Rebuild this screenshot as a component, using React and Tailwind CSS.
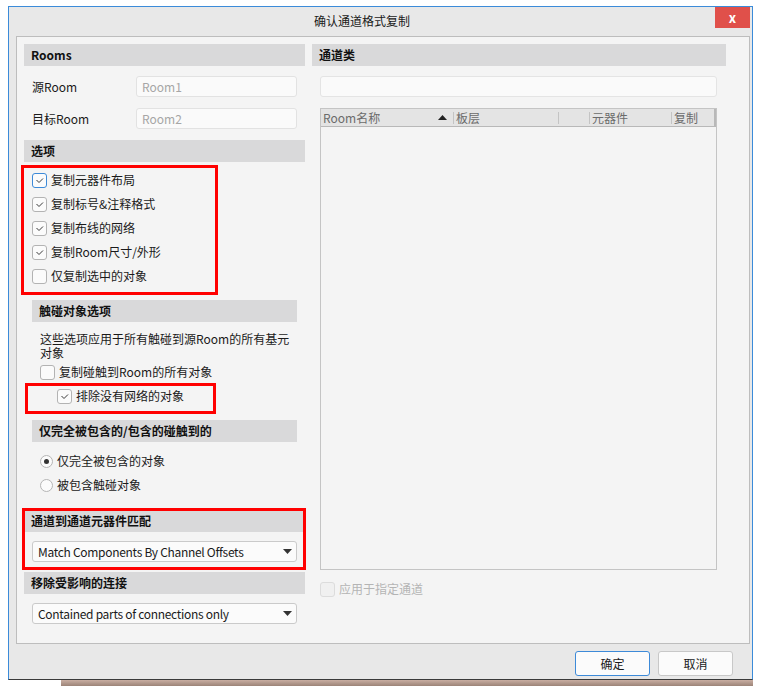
import React from "react";

const Header = ({ children, className = "" }) => (
  <div
    className={`h-[22px] bg-[#d9d9da] flex items-center pl-[7px] text-[12px] font-bold text-[#111] ${className}`}
  >
    {children}
  </div>
);

const Check = ({ checked, focus, disabled }) => (
  <span
    className={`w-[15px] h-[15px] rounded-[3px] border flex items-center justify-center shrink-0 ${
      focus ? "border-[#3d8ad8] bg-[#fbfbfb]" : disabled ? "border-[#dcdcdc] bg-[#f0f0f0]" : "border-[#b3b3b3] bg-[#fbfbfb]"
    }`}
  >
    {checked && (
      <svg width="11" height="11" viewBox="0 0 11 11">
        <polyline points="2.5,5 5,7.5 9,3.5" fill="none" stroke="#3a3a3a" strokeWidth="1" />
      </svg>
    )}
  </span>
);

const CheckRow = ({ label, checked, focus, disabled, className = "" }) => (
  <div className={`h-[24px] flex items-center gap-[4px] ${className}`}>
    <Check checked={checked} focus={focus} disabled={disabled} />
    <span className={`text-[12px] ${disabled ? "text-[#b4b4b4]" : "text-[#1a1a1a]"}`}>{label}</span>
  </div>
);

const RadioRow = ({ label, checked }) => (
  <div className="h-[24px] flex items-center gap-[4px] ml-[16px]">
    <span className="w-[13px] h-[13px] rounded-full border border-[#b5b5b5] bg-[#fbfbfb] flex items-center justify-center">
      {checked && <span className="w-[5px] h-[5px] rounded-full bg-[#333]" />}
    </span>
    <span className="text-[12px] text-[#1a1a1a]">{label}</span>
  </div>
);

const Select = ({ value, className = "" }) => (
  <div
    className={`h-[21px] ml-[8px] w-[265px] rounded-[3px] border border-[#cacaca] bg-[#fbfbfb] flex items-center justify-between pl-[5px] pr-[4px] text-[12px] text-[#1a1a1a] ${className}`}
  >
    <span className="tracking-[-0.3px] leading-[18px]">{value}</span>
    <svg width="9" height="5" viewBox="0 0 9 5">
      <polygon points="0,0 9,0 4.5,5" fill="#333" />
    </svg>
  </div>
);

const Field = ({ label, value, className = "" }) => (
  <div className={`h-[21px] flex items-center ${className}`}>
    <span className="w-[112px] pl-[8px] text-[12px] text-[#1a1a1a]">{label}</span>
    <div className="w-[161px] h-[21px] rounded-[3px] border border-[#e2e2e2] bg-[#fafafa] flex items-center pl-[5px] text-[12px] text-[#a6a6a6]">
      {value}
    </div>
  </div>
);

const Sep = () => <span className="w-px h-[12px] bg-[#c4c4c4] shrink-0" />;

export default function App() {
  return (
    <div className="relative w-[762px] h-[694px] bg-white pt-[6px] pl-[8px] font-['Noto_Sans_CJK_SC','Noto_Sans',sans-serif]">
      <div className="w-[745px] h-[674px] border-t border-l border-r border-b border-[#3b8bd9] border-b-[#3a3a3a] bg-[#e8e8e8] flex flex-col">
        {/* title bar */}
        <div className="h-[28px] flex shrink-0">
          <div className="flex-1 flex items-center justify-center text-[12px] text-[#1a1a1a]">确认通道格式复制</div>
          <div className="w-[35px] h-[21px] mr-[2px] bg-[#e0504a] flex items-center justify-center text-white text-[13px] font-bold">
            x
          </div>
        </div>

        {/* main panel */}
        <div className="mt-px ml-[7px] w-[734px] h-[608px] border border-[#bdbdbd] bg-[#f4f4f4] pl-[7px] pt-[7px] flex gap-[7px] shrink-0">
          {/* left column */}
          <div className="w-[281px] flex flex-col">
            <Header>Rooms</Header>
            <Field label="源Room" value="Room1" className="mt-[10px]" />
            <Field label="目标Room" value="Room2" className="mt-[11px]" />
            <Header className="mt-[11px]">选项</Header>
            <div className="mt-[6px] pl-[8px] flex flex-col">
              <CheckRow label="复制元器件布局" checked focus />
              <CheckRow label="复制标号&注释格式" checked />
              <CheckRow label="复制布线的网络" checked />
              <CheckRow label="复制Room尺寸/外形" checked />
              <CheckRow label="仅复制选中的对象" />
            </div>
            <Header className="mt-[12px] ml-[8px] w-[265px]">触碰对象选项</Header>
            <p className="mt-[10px] ml-[16px] w-[257px] text-[12px] leading-[14px] text-[#1a1a1a]">
              这些选项应用于所有触碰到源Room的所有基元对象
            </p>
            <CheckRow label="复制碰触到Room的所有对象" className="ml-[16px]" />
            <CheckRow label="排除没有网络的对象" checked className="ml-[33px]" />
            <Header className="mt-[12px] ml-[8px] w-[265px]">仅完全被包含的/包含的碰触到的</Header>
            <div className="mt-[7px] flex flex-col">
              <RadioRow label="仅完全被包含的对象" checked />
              <RadioRow label="被包含触碰对象" />
            </div>
            <Header className="mt-[13px] h-[21px]">通道到通道元器件匹配</Header>
            <Select value="Match Components By Channel Offsets" className="mt-[9px]" />
            <Header className="mt-[10px]">移除受影响的连接</Header>
            <Select value="Contained parts of connections only" className="mt-[9px]" />
          </div>

          {/* right column */}
          <div className="w-[414px] flex flex-col">
            <Header>通道类</Header>
            <div className="mt-[10px] ml-[8px] w-[397px] h-[21px] rounded-[3px] border border-[#e4e4e4] bg-[#fafafa]" />
            <div className="mt-[11px] ml-[8px] w-[397px] h-[462px] border border-[#c4c4c4] bg-[#f4f4f4] flex flex-col">
              <div className="h-[18px] bg-[#e4e4e4] border-b border-r-2 border-[#b8b8b8] flex items-center text-[12px] text-[#6b6b6b]">
                <div className="w-[132px] flex items-center justify-between pl-[2px] pr-[6px]">
                  <span>Room名称</span>
                  <svg width="9" height="5" viewBox="0 0 9 5">
                    <polygon points="0,5 9,5 4.5,0" fill="#222" />
                  </svg>
                </div>
                <Sep />
                <span className="w-[104px] pl-[2px]">板层</span>
                <Sep />
                <span className="w-[30px]" />
                <Sep />
                <span className="w-[81px] pl-[2px]">元器件</span>
                <Sep />
                <span className="pl-[2px]">复制</span>
              </div>
            </div>
            <CheckRow label="应用于指定通道" disabled className="mt-[7px] ml-[8px]" />
          </div>
        </div>

        {/* buttons */}
        <div className="mt-[7px] flex justify-end gap-[8px] pr-[19px]">
          <button className="w-[75px] h-[25px] rounded-[3px] border border-[#3d8ad8] bg-[#fbfbfb] text-[12px] text-[#1a1a1a]">
            确定
          </button>
          <button className="w-[75px] h-[25px] rounded-[3px] border border-[#c8c8c8] bg-[#fbfbfb] text-[12px] text-[#1a1a1a]">
            取消
          </button>
        </div>
      </div>

      {/* taskbar strip beneath window */}
      <div className="ml-[53px] w-[692px] h-[6px] bg-gradient-to-b from-[#c9aea2] to-[#9c8478]" />

      {/* red annotation boxes */}
      <div className="absolute left-[21px] top-[165px] w-[197px] h-[130px] border-[3px] border-[#ff0000]" />
      <div className="absolute left-[25px] top-[383px] w-[191px] h-[31px] border-[3px] border-[#ff0000]" />
      <div className="absolute left-[22px] top-[508px] w-[284px] h-[62px] border-[3px] border-[#ff0000]" />
    </div>
  );
}
